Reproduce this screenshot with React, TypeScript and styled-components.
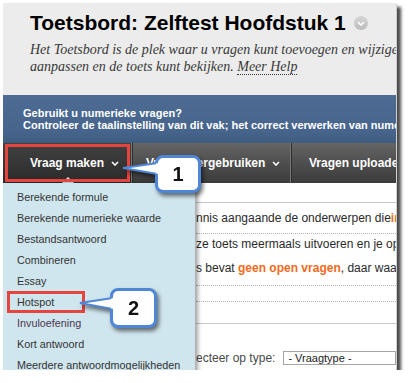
import React from "react";
import styled, { createGlobalStyle } from "styled-components";

const Global = createGlobalStyle`
  html, body { margin: 0; padding: 0; background: #fff; }
  body { font-family: "Liberation Sans", Arial, sans-serif; }
`;

const Frame = styled.div`
  position: relative;
  margin: 3px 0 0 3px;
  width: 393px;
  height: 367px;
  overflow: hidden;
  background: #fff;
  box-shadow: 1px 1px 0 #cfcfcf, 5px 4px 3px rgba(0, 0, 0, 0.7);
`;

const Header = styled.header`
  height: 92px;
  box-sizing: border-box;
  background: #ececec;
  padding: 8px 0 0 27px;
`;

const TitleRow = styled.div`
  display: flex;
  align-items: center;
  gap: 8px;
`;

const Title = styled.h1`
  margin: 0;
  font: bold 21px/24px "Liberation Sans", Arial, sans-serif;
  color: #000;
  white-space: nowrap;
`;

const TitleIcon = styled.span`
  width: 14px;
  height: 14px;
  border-radius: 50%;
  background: linear-gradient(#d6d6d6, #bcbcbc);
  display: inline-flex;
  align-items: center;
  justify-content: center;
  flex: none;
`;

const Description = styled.p`
  margin: 6px 0 0;
  font: italic 14px/17px "Liberation Serif", "Times New Roman", serif;
  color: #383838;
  white-space: nowrap;
`;

const HelpLink = styled.span`
  border-bottom: 1px dotted #333;
`;

const Banner = styled.div`
  height: 48px;
  box-sizing: border-box;
  padding: 12px 0 0 20px;
  background: linear-gradient(#4e6c93, #47658c 75%, #3f5b80);
  color: #fff;
  font: bold 11px/12px "Liberation Sans", Arial, sans-serif;
  white-space: nowrap;
`;

const Toolbar = styled.nav`
  position: relative;
  height: 40px;
  display: flex;
  background: linear-gradient(#656565, #4c4c4c 55%, #3c3c3c);
`;

const ToolItem = styled.div<{ $active?: boolean; $pl: number; $w?: number }>`
  position: relative;
  ${(p) => (p.$w ? `width: ${p.$w}px; flex: none;` : "flex: 1;")}
  box-sizing: border-box;
  display: flex;
  align-items: center;
  gap: 7px;
  padding-left: ${(p) => p.$pl}px;
  color: #fff;
  font: bold 12px "Liberation Sans", Arial, sans-serif;
  white-space: nowrap;
  border-right: 1px solid #2e2e2e;
  box-shadow: inset -2px 0 0 -1px #777;
  background: ${(p) =>
    p.$active ? "linear-gradient(#414141, #2b2b2b)" : "transparent"};
`;

const Pointer = styled.span`
  position: absolute;
  bottom: 0;
  left: 59px;
  width: 0;
  height: 0;
  border-left: 6px solid transparent;
  border-right: 6px solid transparent;
  border-bottom: 6px solid #d8ecf2;
`;

const BodyArea = styled.div`
  position: relative;
  padding-left: 193px;
`;

const Row = styled.div<{ $h: number; $rule?: "solid" | "dotted" }>`
  height: ${(p) => p.$h}px;
  box-sizing: border-box;
  border-bottom: ${(p) =>
    p.$rule === "solid"
      ? "1px solid #c9c9c9"
      : p.$rule === "dotted"
      ? "1px dotted #b3b3b3"
      : "none"};
  display: flex;
  align-items: center;
  white-space: nowrap;
  font: 12px "Liberation Sans", Arial, sans-serif;
  color: #2a2a2a;
`;

const Hot = styled.b`
  color: #f26a21;
  white-space: pre;
`;

const Label = styled.span`
  color: #4a4a4a;
`;

const SelectBox = styled.div`
  margin-left: 8px;
  width: 130px;
  height: 14px;
  box-sizing: border-box;
  border: 1px solid #a5a5a5;
  padding-left: 4px;
  font: 11px/12px "Liberation Sans", Arial, sans-serif;
  color: #222;
  background: #fff;
`;

const Menu = styled.ul`
  position: absolute;
  left: 0;
  top: 0;
  width: 192px;
  height: 200px;
  margin: 0;
  padding: 4px 0 0;
  list-style: none;
  background: #d0e6ee;
  box-shadow: 3px 0 4px rgba(0, 0, 0, 0.35);
`;

const MenuItem = styled.li<{ $visited?: boolean }>`
  height: 21px;
  padding-left: 14px;
  font: 10.8px/21px "Liberation Sans", Arial, sans-serif;
  color: ${(p) => (p.$visited ? "#4d3350" : "#333")};
  white-space: nowrap;
`;

const RedBox = styled.div<{ $x: number; $y: number; $w: number; $h: number }>`
  position: absolute;
  left: ${(p) => p.$x}px;
  top: ${(p) => p.$y}px;
  width: ${(p) => p.$w}px;
  height: ${(p) => p.$h}px;
  box-sizing: border-box;
  border: 3px solid #e6443f;
`;

const CalloutWrap = styled.div<{ $x: number; $y: number }>`
  position: absolute;
  left: ${(p) => p.$x}px;
  top: ${(p) => p.$y}px;
  filter: drop-shadow(2px 3px 2px rgba(0, 0, 0, 0.55));
`;

const CalloutBox = styled.div<{ $w: number; $h: number }>`
  width: ${(p) => p.$w}px;
  height: ${(p) => p.$h}px;
  box-sizing: border-box;
  border: 3px solid #4f87d6;
  border-radius: 8px;
  background: #fff;
  display: flex;
  align-items: center;
  justify-content: center;
  font: bold 20px "Liberation Sans", Arial, sans-serif;
  color: #111;
`;

const Tail = styled.svg<{ $top: number; $len: number }>`
  position: absolute;
  top: ${(p) => p.$top}px;
  left: ${(p) => -p.$len}px;
  overflow: visible;
`;

const Chevron = ({ color = "#fff" }: { color?: string }) => (
  <svg width="8" height="5" viewBox="0 0 8 5">
    <path d="M1 1 L4 4 L7 1" fill="none" stroke={color} strokeWidth="1.6" />
  </svg>
);

const Callout = ({
  x,
  y,
  w,
  h,
  label,
  tailTop,
  tailLen,
  tip,
  spread,
}: {
  x: number;
  y: number;
  w: number;
  h: number;
  label: string;
  tailTop: number;
  tailLen: number;
  tip: number;
  spread: [number, number];
}) => {
  const L = tailLen + 4;
  return (
    <CalloutWrap $x={x} $y={y}>
      <CalloutBox $w={w} $h={h}>{label}</CalloutBox>
      <Tail $top={tailTop} $len={tailLen} width={L} height={spread[1] + 2}>
        <path
          d={`M${L} ${spread[0]} L0 ${tip} L${L} ${spread[1]} Z`}
          fill="#fff"
          stroke="none"
        />
        <path
          d={`M${tailLen + 1} ${spread[0] + 0.3} L0 ${tip} L${tailLen + 1} ${spread[1] - 0.3}`}
          fill="none"
          stroke="#4f87d6"
          strokeWidth="2"
        />
      </Tail>
    </CalloutWrap>
  );
};

const menuItems = [
  "Berekende formule",
  "Berekende numerieke waarde",
  "Bestandsantwoord",
  "Combineren",
  "Essay",
  "Hotspot",
  "Invuloefening",
  "Kort antwoord",
  "Meerdere antwoordmogelijkheden",
];

export default function App() {
  return (
    <>
      <Global />
      <Frame>
        <Header>
          <TitleRow>
            <Title>Toetsbord: Zelftest Hoofdstuk 1</Title>
            <TitleIcon>
              <Chevron />
            </TitleIcon>
          </TitleRow>
          <Description>
            Het Toetsbord is de plek waar u vragen kunt toevoegen en wijzigen, vragen
            <br />
            aanpassen en de toets kunt bekijken. <HelpLink>Meer Help</HelpLink>
          </Description>
        </Header>
        <Banner>
          Gebruikt u numerieke vragen?
          <br />
          Controleer de taalinstelling van dit vak; het correct verwerken van numerieke waarden
        </Banner>
        <Toolbar>
          <ToolItem $active $pl={27} $w={130}>
            Vraag maken <Chevron />
            <Pointer />
          </ToolItem>
          <ToolItem $pl={13} $w={159}>
            Vragen hergebruiken <Chevron />
          </ToolItem>
          <ToolItem $pl={17}>Vragen uploaden</ToolItem>
        </Toolbar>
        <BodyArea>
          <Row $h={20} $rule="solid" />
          <Row $h={31} $rule="dotted">
            nnis aangaande de onderwerpen die <Hot>in dit hoofdstuk</Hot>
          </Row>
          <Row $h={20}>ze toets meermaals uitvoeren en je opnieuw testen</Row>
          <Row $h={28}>
            s bevat&nbsp;<Hot>geen open vragen</Hot>, daar waar mogelijk
          </Row>
          <Row $h={4} $rule="dotted" />
          <Row $h={16} $rule="dotted" />
          <Row $h={22} $rule="solid" />
          <Row $h={26} />
          <Row $h={16}>
            <Label>ecteer op type:</Label>
            <SelectBox>- Vraagtype -</SelectBox>
          </Row>
          <Menu>
            {menuItems.map((m) => (
              <MenuItem key={m} $visited={m === "Invuloefening"}>
                {m}
              </MenuItem>
            ))}
          </Menu>
        </BodyArea>
        <RedBox $x={2} $y={141} $w={125} $h={38} />
        <RedBox $x={4} $y={288} $w={78} $h={22} />
        <Callout
          x={152}
          y={152}
          w={46}
          h={38}
          label="1"
          tailTop={8}
          tailLen={32}
          tip={5}
          spread={[0, 11]}
        />
        <Callout
          x={107}
          y={285}
          w={47}
          h={40}
          label="2"
          tailTop={10}
          tailLen={30}
          tip={5}
          spread={[0, 11]}
        />
      </Frame>
    </>
  );
}
